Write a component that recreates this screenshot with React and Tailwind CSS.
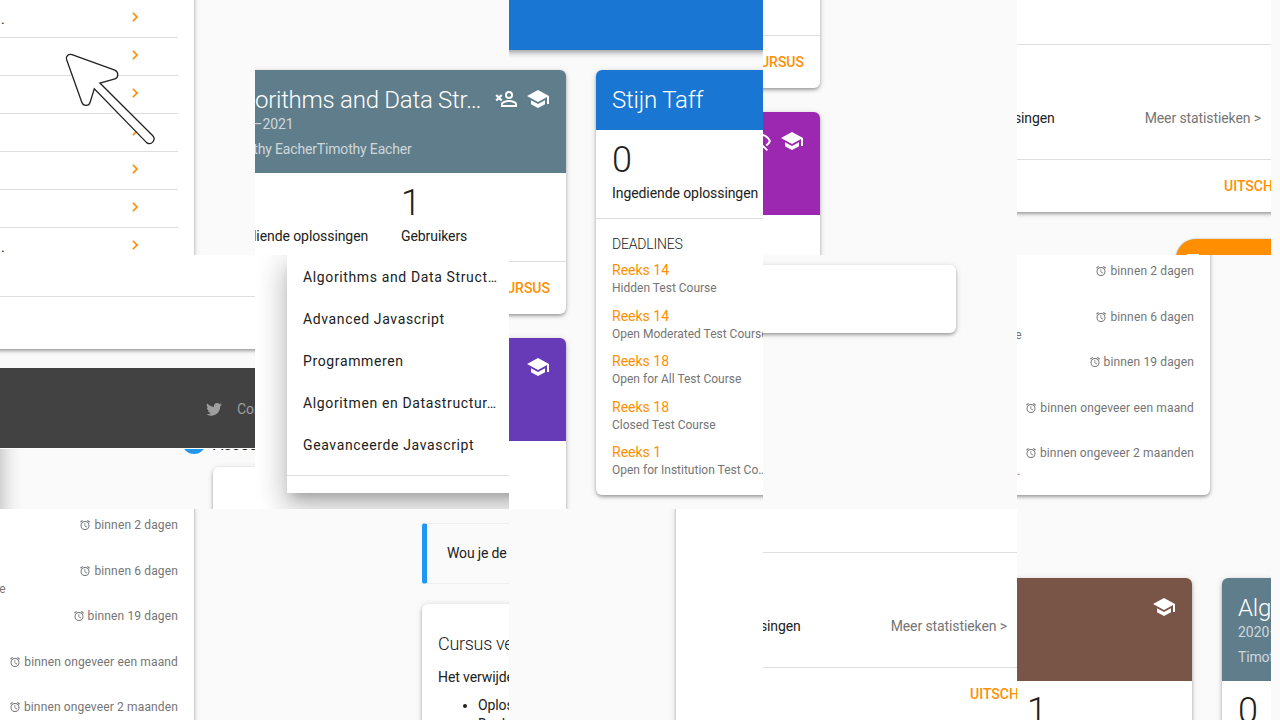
import React from "react";

const SCHOOL =
  "M12,3L1,9L12,15L21,10.09V17H23V9M5,13.18V17.18L12,21L19,17.18V13.18L12,17L5,13.18Z";
const PERSON =
  "M15,4A4,4 0 0,0 11,8A4,4 0 0,0 15,12A4,4 0 0,0 19,8A4,4 0 0,0 15,4M15,5.9C16.16,5.9 17.1,6.84 17.1,8A2.1,2.1 0 0,1 15,10.1A2.1,2.1 0 0,1 12.9,8A2.1,2.1 0 0,1 15,5.9M15,13C12.33,13 7,14.33 7,17V20H23V17C23,14.33 17.67,13 15,13M15,14.9C17.97,14.9 21.1,16.36 21.1,17V18.1H8.9V17C8.9,16.36 12,14.9 15,14.9Z";
const EYE_OFF =
  "M2,5.27L3.28,4L20,20.72L18.73,22L15.65,18.92C14.5,19.3 13.28,19.5 12,19.5C7,19.5 2.73,16.39 1,12C1.69,10.24 2.79,8.69 4.19,7.46L2,5.27M12,9A3,3 0 0,1 15,12C15,12.35 14.94,12.69 14.83,13L11,9.17C11.31,9.06 11.65,9 12,9M12,4.5C17,4.5 21.27,7.61 23,12C22.18,14.08 20.79,15.88 19,17.19L17.58,15.76C18.94,14.82 20.06,13.54 20.82,12C19.17,8.64 15.76,6.5 12,6.5C10.91,6.5 9.84,6.68 8.84,7L7.3,5.47C8.74,4.85 10.33,4.5 12,4.5M3.18,12C4.83,15.36 8.24,17.5 12,17.5C12.69,17.5 13.37,17.43 14,17.29L11.72,15C10.29,14.85 9.15,13.71 9,12.28L5.6,8.87C4.61,9.72 3.78,10.78 3.18,12Z";
const ALARM =
  "M12,20A7,7 0 0,1 5,13A7,7 0 0,1 12,6A7,7 0 0,1 19,13A7,7 0 0,1 12,20M12,4A9,9 0 0,0 3,13A9,9 0 0,0 12,22A9,9 0 0,0 21,13A9,9 0 0,0 12,4M12.5,8H11V14L15.75,16.85L16.5,15.62L12.5,13.25V8M7.88,3.39L6.6,1.86L2,5.71L3.29,7.24L7.88,3.39M22,5.72L17.4,1.86L16.11,3.39L20.71,7.25L22,5.72Z";
const TWITTER =
  "M22.46,6C21.69,6.35 20.86,6.58 20,6.69C20.88,6.16 21.56,5.32 21.88,4.31C21.05,4.81 20.13,5.16 19.16,5.36C18.37,4.5 17.26,4 16,4C13.65,4 11.73,5.92 11.73,8.29C11.73,8.63 11.77,8.96 11.84,9.27C8.28,9.09 5.11,7.38 3,4.79C2.63,5.42 2.42,6.16 2.42,6.94C2.42,8.43 3.17,9.75 4.33,10.5C3.62,10.5 2.96,10.3 2.38,10C2.38,10 2.38,10 2.38,10.03C2.38,12.11 3.86,13.85 5.82,14.24C5.46,14.34 5.08,14.39 4.69,14.39C4.42,14.39 4.15,14.36 3.89,14.31C4.43,16 6,17.26 7.89,17.29C6.43,18.45 4.58,19.13 2.56,19.13C2.22,19.13 1.88,19.11 1.54,19.07C3.44,20.29 5.7,21 8.12,21C16,21 20.33,14.46 20.33,8.79C20.33,8.6 20.33,8.42 20.32,8.23C21.16,7.63 21.88,6.87 22.46,6Z";

const SHADOW =
  "shadow-[0_2px_4px_-1px_rgba(0,0,0,0.26),0_2px_3px_0_rgba(0,0,0,0.14),0_1px_7px_0_rgba(0,0,0,0.12)]";

function Icon({ d, className, children }) {
  return (
    <svg viewBox="0 0 24 24" fill="currentColor" className={"block shrink-0 " + className}>
      <path d={d} />
      {children}
    </svg>
  );
}

function PersonRemove() {
  return (
    <Icon d={PERSON} className="-ml-px size-6">
      <path d="M2.2,8L7.7,13.5M7.7,8L2.2,13.5" stroke="currentColor" strokeWidth="2.2" fill="none" />
    </Icon>
  );
}

function Tile({ className = "bg-[#fafafa]", children }) {
  return <div className={"relative flex flex-col items-start overflow-hidden " + className}>{children}</div>;
}

function Stat({ value, label, className = "" }) {
  return (
    <div className={"pt-[10px] " + className}>
      <div className="h-10 text-[36px] leading-10 font-light">{value}</div>
      <div className="mt-[3px] h-5 whitespace-nowrap leading-5 tracking-[-0.08px]">{label}</div>
    </div>
  );
}

function CourseCard({ color, title, year, teacher, icons }) {
  return (
    <div className={"h-[244px] w-[360px] shrink-0 overflow-hidden rounded-[6px] bg-white " + SHADOW}>
      <div className={"flex h-[103px] justify-between px-4 pt-[15px] text-white " + color}>
        <div className="w-[260px] shrink-0 whitespace-nowrap">
          <div className="h-[30px] text-[24px] leading-[30px] font-light tracking-[-0.25px]">{title}</div>
          <div className="h-[18px] leading-[18px] tracking-[-0.05px] text-white/70">{year}</div>
          <div className="mt-[7px] h-[18px] leading-[18px] tracking-[-0.17px] text-white/70">{teacher}</div>
        </div>
        <div className="mt-0.5 flex gap-2">
          {icons}
          <Icon d={SCHOOL} className="size-6" />
        </div>
      </div>
      <div className="flex h-[88px] pl-4">
        <Stat value="0" label="Ingediende oplossingen" className="w-[179px] shrink-0" />
        <Stat value="1" label="Gebruikers" />
      </div>
      <div className="flex h-[53px] items-center justify-end border-t border-[#dedede] px-4 font-medium text-[#ff8f00]">
        NAAR DE CURSUS
      </div>
    </div>
  );
}

const algo = {
  color: "bg-[#607d8b]",
  title: "Algorithms and Data Str…",
  year: "2020–2021",
  teacher: "Timothy EacherTimothy Eacher",
};

const deadlines = [
  ["Reeks 14", "Hidden Test Course", "binnen 2 dagen"],
  ["Reeks 14", "Open Moderated Test Course", "binnen 6 dagen"],
  ["Reeks 18", "Open for All Test Course", "binnen 19 dagen"],
  ["Reeks 18", "Closed Test Course", "binnen ongeveer een maand"],
  ["Reeks 1", "Open for Institution Test Co…", "binnen ongeveer 2 maanden"],
];

function Deadlines() {
  return deadlines.map(([name, course, due]) => (
    <div key={course} className="h-[45.5px]">
      <div className="flex h-5 justify-between whitespace-nowrap">
        <span className="leading-5 text-[#ff8f00]">{name}</span>
        <span className="flex items-center text-[12px] leading-[22px] tracking-[0.14px] text-[#757575]">
          <Icon d={ALARM} className="mr-[3px] size-3" />
          {due}
        </span>
      </div>
      <div className="h-4 whitespace-nowrap text-[12px] leading-4 text-[#757575]">{course}</div>
    </div>
  ));
}

function StatsPanel({ className }) {
  return (
    <div className={"-ml-[124px] w-[400px] shrink-0 bg-white " + className}>
      <div className="h-[115px] border-t border-[#dedede] pt-[63px]">
        <div className="flex w-[368px] justify-between whitespace-nowrap pl-4 leading-5 tracking-[-0.1px]">
          <span>Ingediende oplossingen</span>
          <span className="text-[#757575]">Meer statistieken &gt;</span>
        </div>
      </div>
      <div className="h-[53px] border-t border-[#dedede] pt-4 pl-[331px] leading-5 font-medium whitespace-nowrap text-[#ff8f00]">
        UITSCHRIJVEN
      </div>
    </div>
  );
}

function ListTile() {
  return (
    <Tile>
      <div className={"-mt-4 h-[290px] w-[194px] shrink-0 bg-white pt-4 " + SHADOW}>
        {[".", "", "", "", "", "", "."].map((t, i) => (
          <div key={i} className="flex h-[38px] w-[178px] items-center border-b border-[#dedede]">
            <span className="mt-px w-[126px] shrink-0 pl-px">{t}</span>
            <Icon
              d="M8.3,16.9L13.17,12L8.3,7.1L10,5.6L16.3,12L10,18.4L8.3,16.9Z"
              className="-mt-[3px] size-[18px] text-[#ff8f00]"
            />
          </div>
        ))}
      </div>
      <svg className="absolute top-[50px] left-[62px] h-[98px] w-[98px]" viewBox="62 50 98 98">
        <path
          d="M66.5,59.3C65.6,56.4 68.3,53.4 72,54.6L114.8,70.1C118.6,71.5 118.8,77.8 115,78.8L99.9,83L152.8,135.8C156.3,139.7 151.5,145.9 146.6,142.6L94.3,88.8L90.2,102C88.9,106.5 83.3,106.6 81.8,102.3Z"
          fill="#fff"
          stroke="#222"
          strokeWidth="1.3"
        />
      </svg>
    </Tile>
  );
}

function FooterTile() {
  return (
    <Tile>
      <div className={"-mx-4 h-[94px] w-[287px] shrink-0 bg-white pt-[41px] " + SHADOW}>
        <div className="h-px bg-[#dedede]" />
      </div>
      <div className="mt-[19px] flex h-20 w-full shrink-0 items-center bg-[#424242] pt-[2px] pl-[205px] text-[#9e9e9e]">
        <Icon d={TWITTER} className="size-[18px]" />
        <span className="ml-[14px]">Contact</span>
      </div>
      <div className="h-px w-full shrink-0 bg-white" />
      <div className="relative h-[60px] w-full shrink-0 overflow-hidden">
        <div className="absolute -top-40 -left-10 h-[400px] w-10 shadow-[0_6px_20px_2px_rgba(0,0,0,0.27)]" />
        <div className="-mt-[19px] ml-[182px] flex h-6 items-start gap-[7px] whitespace-nowrap">
          <span className="size-6 shrink-0 rounded-full bg-[#2196f3]" />
          <span className="mt-[6px] text-[16px] leading-[17px]">Accounts</span>
        </div>
        <div className={"mt-[13px] ml-[213px] h-20 w-24 rounded-[6px] bg-white " + SHADOW} />
      </div>
    </Tile>
  );
}

const menuItems = [
  "Algorithms and Data Struct…",
  "Advanced Javascript",
  "Programmeren",
  "Algoritmen en Datastructur…",
  "Geavanceerde Javascript",
];

export default function App() {
  return (
    <div className="h-[720px] w-[1280px] overflow-hidden bg-[#fafafa] font-[Roboto,sans-serif] text-[14px] text-[#212121]">
      <div className="grid grid-cols-[255px_254px_254px_254px_254px] grid-rows-[255px_254px_211px]">
        <ListTile />

        <Tile>
          <div className="mt-[70px] -ml-[49px] flex">
            <CourseCard {...algo} icons={<PersonRemove />} />
          </div>
        </Tile>

        <Tile className="row-span-2 bg-[#fafafa]">
          <div className="-mx-4 h-[50px] w-[286px] shrink-0 bg-[#1976d2] shadow-[0_2px_4px_-1px_rgba(0,0,0,0.2),0_4px_5px_0_rgba(0,0,0,0.14),0_1px_10px_0_rgba(0,0,0,0.12)]" />
          <div className="mt-5 -ml-[303px] flex items-start gap-[30px]">
            <div className="flex flex-col gap-6">
              <CourseCard {...algo} icons={<PersonRemove />} />
              <CourseCard color="bg-[#673ab7]" />
            </div>
            <div className={"h-[425px] w-[360px] shrink-0 overflow-hidden rounded-[6px] bg-white " + SHADOW}>
              <div className="h-[60px] bg-[#1976d2] px-4 pt-[15px] text-[24px] leading-[30px] font-light tracking-[-0.2px] text-white">
                Stijn Taff
              </div>
              <div className="h-[88px] px-4">
                <Stat value="0" label="Ingediende oplossingen" />
              </div>
              <div className="border-t border-[#dedede] px-4 pt-[15px]">
                <div className="mb-[6px] h-5 leading-5 font-light tracking-[-0.2px]">DEADLINES</div>
                <Deadlines />
              </div>
            </div>
          </div>
        </Tile>

        <Tile>
          <div className="-mt-[156px] -ml-[303px] flex flex-col gap-6">
            <CourseCard color="bg-[#607d8b]" />
            <CourseCard color="bg-[#9c27b0]" icons={<Icon d={EYE_OFF} className="size-6" />} />
          </div>
        </Tile>

        <Tile>
          <div className={"-ml-4 w-[286px] shrink-0 bg-white pt-[44px] pl-4 " + SHADOW}>
            <StatsPanel className="h-[168px]" />
          </div>
          <div className="mt-[27px] ml-[159px] h-[40px] w-[150px] shrink-0 rounded-[20px] bg-[#ff8f00] pt-[15px] pl-[11px] shadow-[0_0_2px_rgba(0,0,0,0.4)]">
            <div className="h-3 w-3 bg-white" />
          </div>
        </Tile>

        <FooterTile />

        <Tile className="bg-white">
          <div className="ml-8 h-[238px] w-[260px] shrink-0 bg-white pt-px shadow-[0_8px_10px_-5px_rgba(0,0,0,0.2),0_16px_24px_2px_rgba(0,0,0,0.14),0_6px_30px_5px_rgba(0,0,0,0.12)]">
            {menuItems.map((m) => (
              <div key={m} className="h-[42px] pl-4 leading-[42px] tracking-[0.63px] whitespace-nowrap">
                {m}
              </div>
            ))}
            <div className="mt-[9px] h-px bg-[#dedede]" />
          </div>
        </Tile>

        <Tile>
          <div className={"mt-[10px] -ml-10 h-[68px] w-[233px] rounded-[6px] bg-white " + SHADOW} />
        </Tile>

        <Tile>
          <div className={"-mt-10 -ml-[167px] h-[280px] w-[360px] rounded-[6px] bg-white px-4 pt-[46px] " + SHADOW}>
            <Deadlines />
          </div>
        </Tile>

        <Tile>
          <div className={"-mt-10 -ml-[166px] h-[280px] w-[360px] bg-white px-4 pt-[46px] " + SHADOW}>
            <Deadlines />
          </div>
        </Tile>

        <Tile>
          <div className="mt-[14px] ml-[167px] flex h-[61px] w-[200px] shrink-0 items-center rounded-[3px] border border-l-[5px] border-[#eeeeee] border-l-[#2196f3] pl-5 tracking-[-0.15px] whitespace-nowrap">
            Wou je de cursus
          </div>
          <div className={"mt-5 ml-[167px] h-[200px] w-[300px] shrink-0 rounded-[6px] bg-white px-4 pt-[28px] whitespace-nowrap " + SHADOW}>
            <div className="h-[24px] text-[18px] leading-[24px] font-light tracking-[-0.3px]">Cursus verwijderen</div>
            <div className="mt-[11px] h-5 leading-5 tracking-[-0.1px]">Het verwijderen van</div>
            <ul className="mt-2 list-disc pl-10 leading-[20px] tracking-[-0.1px]">
              <li>Oplossingen</li>
              <li className="-mt-px">Deelnemers</li>
            </ul>
          </div>
        </Tile>

        <Tile>
          <div className={"-my-4 ml-[167px] h-[260px] w-[120px] shrink-0 bg-white " + SHADOW} />
        </Tile>

        <Tile className="bg-white">
          <StatsPanel className="mt-[43px]" />
        </Tile>

        <Tile>
          <div className="mt-[69px] -ml-[185px] flex gap-[30px]">
            <CourseCard color="bg-[#795548]" />
            <CourseCard {...algo} />
          </div>
        </Tile>
      </div>
    </div>
  );
}
